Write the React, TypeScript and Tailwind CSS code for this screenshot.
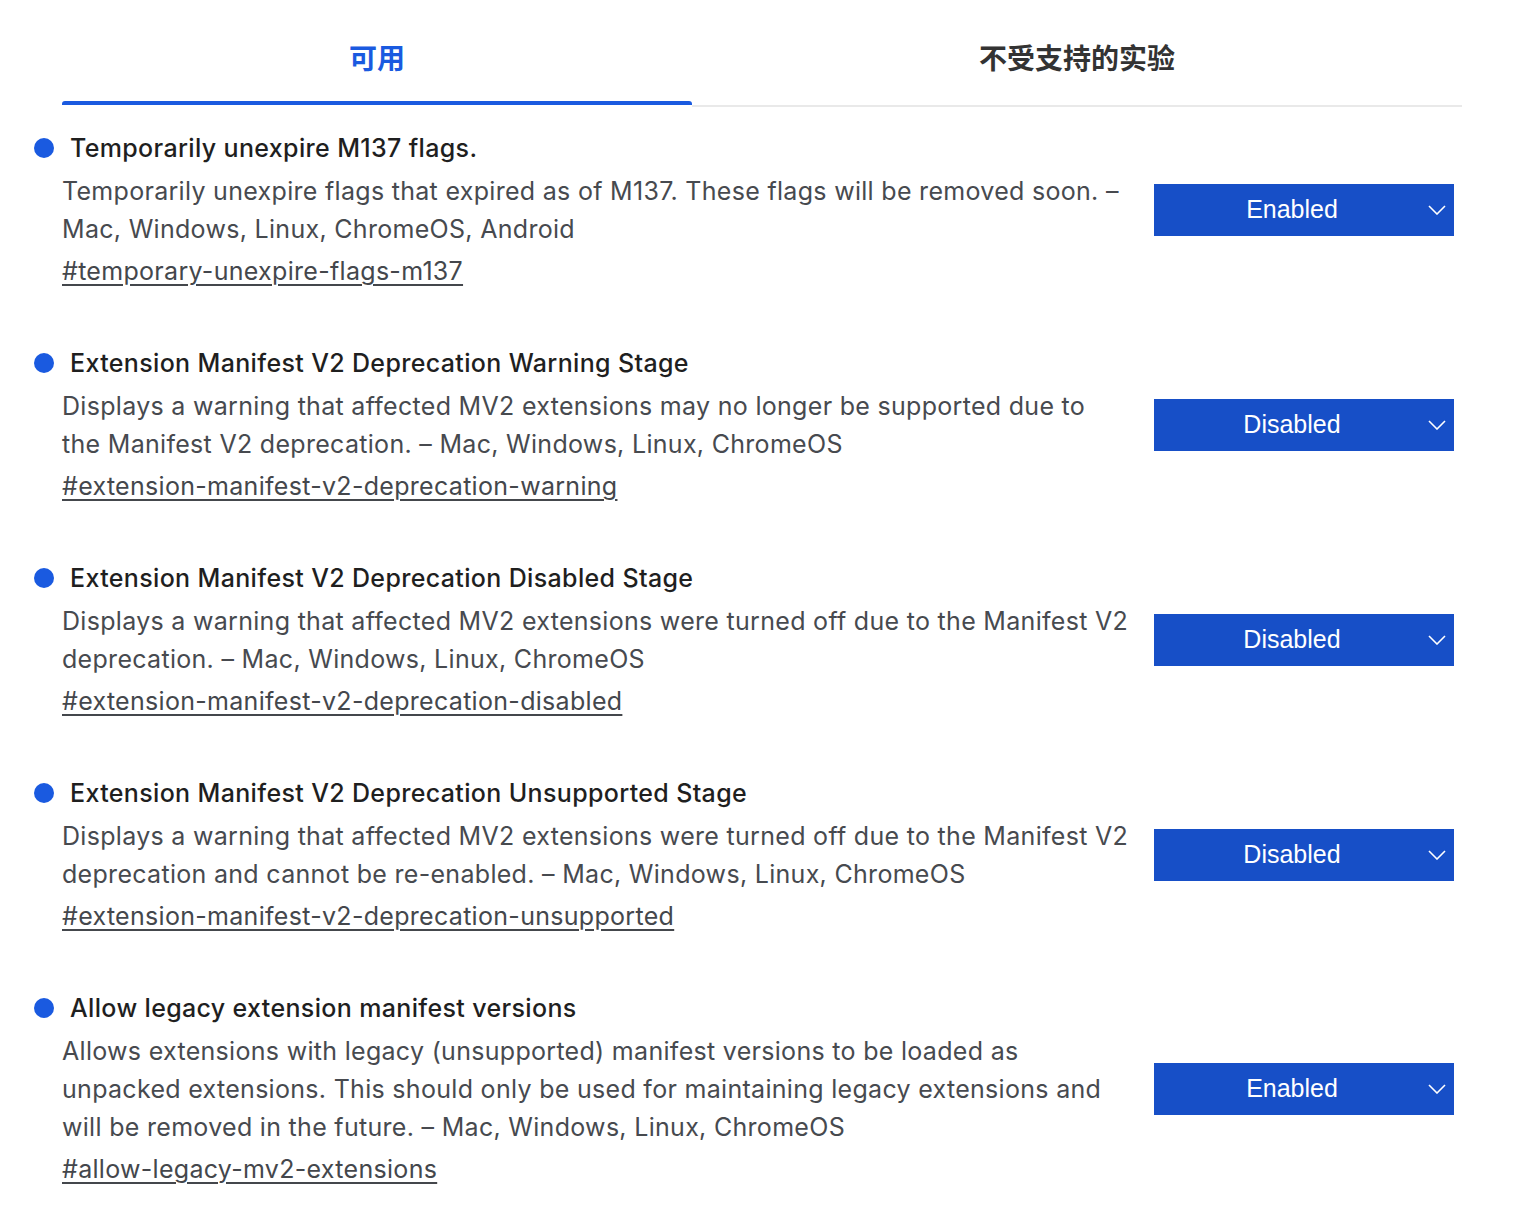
import React from "react";

const flags = [
  {
    title: "Temporarily unexpire M137 flags.",
    desc: [
      "Temporarily unexpire flags that expired as of M137. These flags will be removed soon. –",
      "Mac, Windows, Linux, ChromeOS, Android",
    ],
    link: "#temporary-unexpire-flags-m137",
    value: "Enabled",
  },
  {
    title: "Extension Manifest V2 Deprecation Warning Stage",
    desc: [
      "Displays a warning that affected MV2 extensions may no longer be supported due to",
      "the Manifest V2 deprecation. – Mac, Windows, Linux, ChromeOS",
    ],
    link: "#extension-manifest-v2-deprecation-warning",
    value: "Disabled",
  },
  {
    title: "Extension Manifest V2 Deprecation Disabled Stage",
    desc: [
      "Displays a warning that affected MV2 extensions were turned off due to the Manifest V2",
      "deprecation. – Mac, Windows, Linux, ChromeOS",
    ],
    link: "#extension-manifest-v2-deprecation-disabled",
    value: "Disabled",
  },
  {
    title: "Extension Manifest V2 Deprecation Unsupported Stage",
    desc: [
      "Displays a warning that affected MV2 extensions were turned off due to the Manifest V2",
      "deprecation and cannot be re-enabled. – Mac, Windows, Linux, ChromeOS",
    ],
    link: "#extension-manifest-v2-deprecation-unsupported",
    value: "Disabled",
  },
  {
    title: "Allow legacy extension manifest versions",
    desc: [
      "Allows extensions with legacy (unsupported) manifest versions to be loaded as",
      "unpacked extensions. This should only be used for maintaining legacy extensions and",
      "will be removed in the future. – Mac, Windows, Linux, ChromeOS",
    ],
    link: "#allow-legacy-mv2-extensions",
    value: "Enabled",
  },
];

function Chevron() {
  return (
    <svg width="18" height="10" viewBox="0 0 18 10" fill="none">
      <path d="M1 1 L9 9 L17 1" stroke="white" strokeWidth="1.6" />
    </svg>
  );
}

export default function App() {
  return (
    <div className="w-[1520px] min-h-[1220px] bg-white font-['Inter','Noto_Sans_CJK_SC',sans-serif]">
      {/* Tabs */}
      <div className="ml-[62px] flex w-[1400px]">
        <div className="flex w-[630px] flex-col">
          <div className="flex h-[101px] items-start justify-center pt-[41px]">
            <span className="font-['Noto_Sans_CJK_SC',sans-serif] text-[28px] font-bold leading-[32px] text-[#1a5ae0]">
              可用
            </span>
          </div>
          <div className="h-[4px] rounded-t-[3px] bg-[#1a5ae0]" />
        </div>
        <div className="flex flex-1 flex-col">
          <div className="flex h-[101px] items-start justify-center pt-[41px]">
            <span className="font-['Noto_Sans_CJK_SC',sans-serif] text-[28px] font-bold leading-[32px] text-[#333333]">
              不受支持的实验
            </span>
          </div>
          <div className="h-[4px]" />
          <div className="h-[2px] bg-[#e9e9e9]" />
        </div>
      </div>

      {/* Flags */}
      <div className="mt-[26px] flex flex-col gap-[58px]">
        {flags.map((f) => (
          <div key={f.link} className="flex flex-col">
            <div className="ml-[34px] flex h-[30px] items-center gap-[16px]">
              <span className="h-[20px] w-[20px] rounded-full bg-[#1a5ae0]" />
              <span className="text-[25px] font-medium leading-[30px] tracking-[0.35px] text-[#1f1f1f]">
                {f.title}
              </span>
            </div>
            <div className="ml-[62px] mt-[9px] grid grid-cols-[1068px_300px] gap-x-[24px]">
              <p className="text-[25px] leading-[38px] tracking-[0.3px] text-[#474a4f]">
                {f.desc.map((line) => (
                  <span key={line} className="block whitespace-nowrap">
                    {line}
                  </span>
                ))}
              </p>
              <div className="flex items-center">
                <div className="relative flex h-[52px] w-[300px] items-center justify-center bg-[#174fc7] pr-[24px] font-['Liberation_Sans',Arial,sans-serif] text-[25px] text-white">
                  {f.value}
                  <span className="absolute right-[8px] top-[21px]">
                    <Chevron />
                  </span>
                </div>
              </div>
              <a className="mt-[4px] text-[25px] leading-[38px] tracking-[0.3px] text-[#44474c] underline underline-offset-[4px] decoration-[1.5px]">
                {f.link}
              </a>
            </div>
          </div>
        ))}
      </div>
    </div>
  );
}
